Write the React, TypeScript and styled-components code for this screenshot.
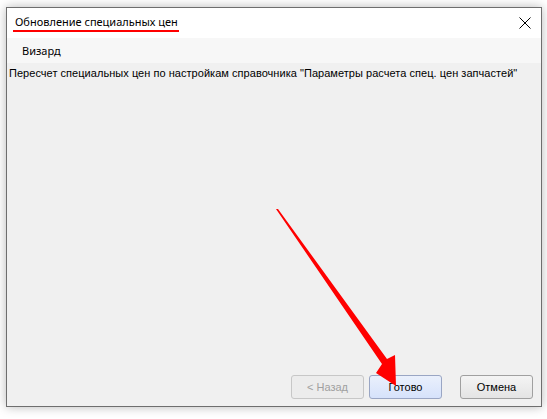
import React from "react";
import styled, { createGlobalStyle } from "styled-components";

const Global = createGlobalStyle`
  html, body { margin: 0; padding: 0; background: #ffffff; }
  body { width: 547px; height: 419px; overflow: hidden; position: relative; }
  * { box-sizing: border-box; }
`;

const Page = styled.div`
  padding: 7px 0 0 6px;
`;

const Window = styled.div`
  width: 536px;
  height: 400px;
  border: 1px solid #6e6e6e;
  background: #f0f0f0;
  box-shadow: 0 0 10px rgba(0, 0, 0, 0.28);
  display: flex;
  flex-direction: column;
`;

const TitleBar = styled.div`
  height: 30px;
  background: #ffffff;
  display: flex;
  align-items: center;
  justify-content: space-between;
  padding: 0 10px 0 6px;
`;

const Title = styled.span`
  font-family: "Noto Sans", "Open Sans", sans-serif;
  font-size: 11px;
  color: #000;
  padding: 0 1px 0 2px;
  margin-top: 0px;
  border-bottom: 2px solid #ff0000;
  line-height: 16px;
`;

const Close = styled.svg`
  width: 12px;
  height: 12px;
  margin-top: -1px;
`;

const Header = styled.div`
  height: 25px;
  background: #f7f7f7;
  display: flex;
  align-items: center;
  padding-left: 15px;
  font-family: "Noto Sans", "Open Sans", sans-serif;
  font-size: 11px;
  color: #000;
`;

const Body = styled.div`
  flex: 1;
  display: flex;
  flex-direction: column;
  justify-content: space-between;
  padding: 4px 8px 7px 2px;
`;

const Description = styled.div`
  font-family: "Liberation Sans", Arial, sans-serif;
  font-size: 11px;
  color: #000;
  letter-spacing: 0.04px;
`;

const Buttons = styled.div`
  display: flex;
  justify-content: flex-end;
  gap: 5px;
`;

const Button = styled.div<{ $primary?: boolean; $disabled?: boolean }>`
  width: 73px;
  height: 24px;
  border: 1px solid ${(p) => (p.$disabled ? "#c7c7c7" : p.$primary ? "#9aa6c4" : "#a0a0a0")};
  border-radius: 3px;
  background: ${(p) =>
    p.$disabled
      ? "#ececec"
      : p.$primary
      ? "linear-gradient(#eaf0fc, #d6e2fb)"
      : "linear-gradient(#f4f4f4, #e4e4e4)"};
  display: flex;
  align-items: center;
  justify-content: center;
  font-family: "Liberation Sans", Arial, sans-serif;
  font-size: 11px;
  color: ${(p) => (p.$disabled ? "#a0a0a0" : "#000")};
`;

const Spacer = styled.div`
  width: 8px;
`;

const Overlay = styled.svg`
  position: absolute;
  left: 0;
  top: 0;
  width: 547px;
  height: 419px;
  pointer-events: none;
`;

export default function App() {
  return (
    <>
      <Global />
      <Page>
        <Window>
          <TitleBar>
            <Title>Обновление специальных цен</Title>
            <Close viewBox="0 0 12 12">
              <path d="M0.5 0.5 L11.5 11.5 M11.5 0.5 L0.5 11.5" stroke="#000" strokeWidth="1" />
            </Close>
          </TitleBar>
          <Header>Визард</Header>
          <Body>
            <Description>
              Пересчет специальных цен по настройкам справочника "Параметры расчета спец. цен запчастей"
            </Description>
            <Buttons>
              <Button $disabled>&lt; Назад</Button>
              <Button $primary>Готово</Button>
              <Spacer />
              <Button>Отмена</Button>
            </Buttons>
          </Body>
        </Window>
      </Page>
      <Overlay viewBox="0 0 547 419">
        <polygon
          points="276,209 278,209 387,359 395,355 396,386 376,373 382,364"
          fill="#ff0000"
        />
      </Overlay>
    </>
  );
}
